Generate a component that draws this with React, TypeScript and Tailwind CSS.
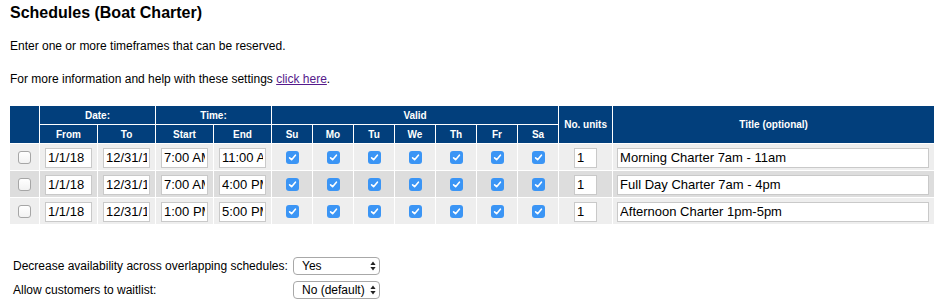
const days = ["Su", "Mo", "Tu", "We", "Th", "Fr", "Sa"];

const rows = [
  { from: "1/1/18", to: "12/31/18", start: "7:00 AM", end: "11:00 AM", units: "1", title: "Morning Charter 7am - 11am", bg: "bg-[#eeeeee]" },
  { from: "1/1/18", to: "12/31/18", start: "7:00 AM", end: "4:00 PM", units: "1", title: "Full Day Charter 7am - 4pm", bg: "bg-[#dddddd]" },
  { from: "1/1/18", to: "12/31/18", start: "1:00 PM", end: "5:00 PM", units: "1", title: "Afternoon Charter 1pm-5pm", bg: "bg-[#eeeeee]" },
];

function Check({ checked }: { checked: boolean }) {
  if (!checked) {
    return (
      <span className="inline-block w-[13px] h-[13px] rounded-[3px] border border-[#a6a6a6] bg-gradient-to-b from-white to-[#f2f2f2] align-middle" />
    );
  }
  return (
    <span className="inline-flex items-center justify-center w-[13px] h-[13px] rounded-[3px] bg-[#3b95f5] align-middle">
      <svg width="9" height="9" viewBox="0 0 9 9" fill="none">
        <path d="M1.6 4.8 L3.6 6.7 L7.4 2.2" stroke="white" strokeWidth="1.6" strokeLinecap="round" strokeLinejoin="round" />
      </svg>
    </span>
  );
}

function TextBox({ value, w }: { value: string; w: string }) {
  return (
    <input
      readOnly
      value={value}
      className={`${w} h-[20px] border border-[#c9c9c9] bg-white px-[2px] text-[13px] text-black align-middle outline-none`}
    />
  );
}

function FakeSelect({ value }: { value: string }) {
  return (
    <div className="flex shrink-0 items-center justify-between w-[87px] h-[18px] rounded-[4px] border border-[#a8a8a8] bg-white pl-[8px] pr-[3px] text-[12px]">
      <span>{value}</span>
      <svg width="6" height="10" viewBox="0 0 6 10">
        <path d="M3 0.5 L5.6 4 L0.4 4 Z" fill="#222" />
        <path d="M3 9.5 L5.6 6 L0.4 6 Z" fill="#222" />
      </svg>
    </div>
  );
}

export default function App() {
  const th = "bg-[#023f7c] text-white text-[10px] font-bold text-center p-0 h-[18px]";
  return (
    <div className="w-[936px] h-[305px] overflow-hidden bg-white text-black font-['Liberation_Sans',Arial,sans-serif]">
      <h1 className="pl-[10px] pt-[4px] text-[16px] leading-[18px] font-bold">Schedules (Boat Charter)</h1>
      <p className="pl-[10px] mt-[17px] text-[12px] leading-[14px]">Enter one or more timeframes that can be reserved.</p>
      <p className="pl-[10px] mt-[19px] text-[12px] leading-[14px]">
        For more information and help with these settings{" "}
        <a className="underline text-[#551a8b]" href="#">click here</a>.
      </p>

      {/* Schedules table */}
      <table className="mt-[19px] ml-[9px] w-[925px] table-fixed border-separate border-spacing-[1px]">
        <colgroup>
          <col className="w-[29px]" />
          <col className="w-[57px]" />
          <col className="w-[57px]" />
          <col className="w-[57px]" />
          <col className="w-[57px]" />
          {days.map((d) => (
            <col key={d} className="w-[40px]" />
          ))}
          <col className="w-[53px]" />
          <col className="w-[321px]" />
        </colgroup>
        <thead>
          <tr>
            <th rowSpan={2} className={th}></th>
            <th colSpan={2} className={th}>Date:</th>
            <th colSpan={2} className={th}>Time:</th>
            <th colSpan={7} className={th}>Valid</th>
            <th rowSpan={2} className={th}>No. units</th>
            <th rowSpan={2} className={th}>Title (optional)</th>
          </tr>
          <tr>
            <th className={th}>From</th>
            <th className={th}>To</th>
            <th className={th}>Start</th>
            <th className={th}>End</th>
            {days.map((d) => (
              <th key={d} className={th}>{d}</th>
            ))}
          </tr>
        </thead>
        <tbody>
          {rows.map((r, i) => (
            <tr key={i} className={r.bg}>
              <td className="h-[26px] p-0 text-center">
                <Check checked={false} />
              </td>
              <td className="p-0 text-center"><TextBox value={r.from} w="w-[47px]" /></td>
              <td className="p-0 text-center"><TextBox value={r.to} w="w-[47px]" /></td>
              <td className="p-0 text-center"><TextBox value={r.start} w="w-[47px]" /></td>
              <td className="p-0 text-center"><TextBox value={r.end} w="w-[47px]" /></td>
              {days.map((d) => (
                <td key={d} className="p-0 text-center">
                  <Check checked={true} />
                </td>
              ))}
              <td className="p-0 text-center"><TextBox value={r.units} w="w-[23px]" /></td>
              <td className="p-0 pl-[4px] text-left"><TextBox value={r.title} w="w-[312px]" /></td>
            </tr>
          ))}
        </tbody>
      </table>

      {/* Options */}
      <div className="mt-[32px] pl-[13px] flex flex-col gap-[6px] text-[12px]">
        <div className="flex items-center h-[18px]">
          <span className="w-[280px] shrink-0 whitespace-nowrap">Decrease availability across overlapping schedules:</span>
          <FakeSelect value="Yes" />
        </div>
        <div className="flex items-center h-[18px]">
          <span className="w-[280px] shrink-0 whitespace-nowrap">Allow customers to waitlist:</span>
          <FakeSelect value="No (default)" />
        </div>
      </div>
    </div>
  );
}
